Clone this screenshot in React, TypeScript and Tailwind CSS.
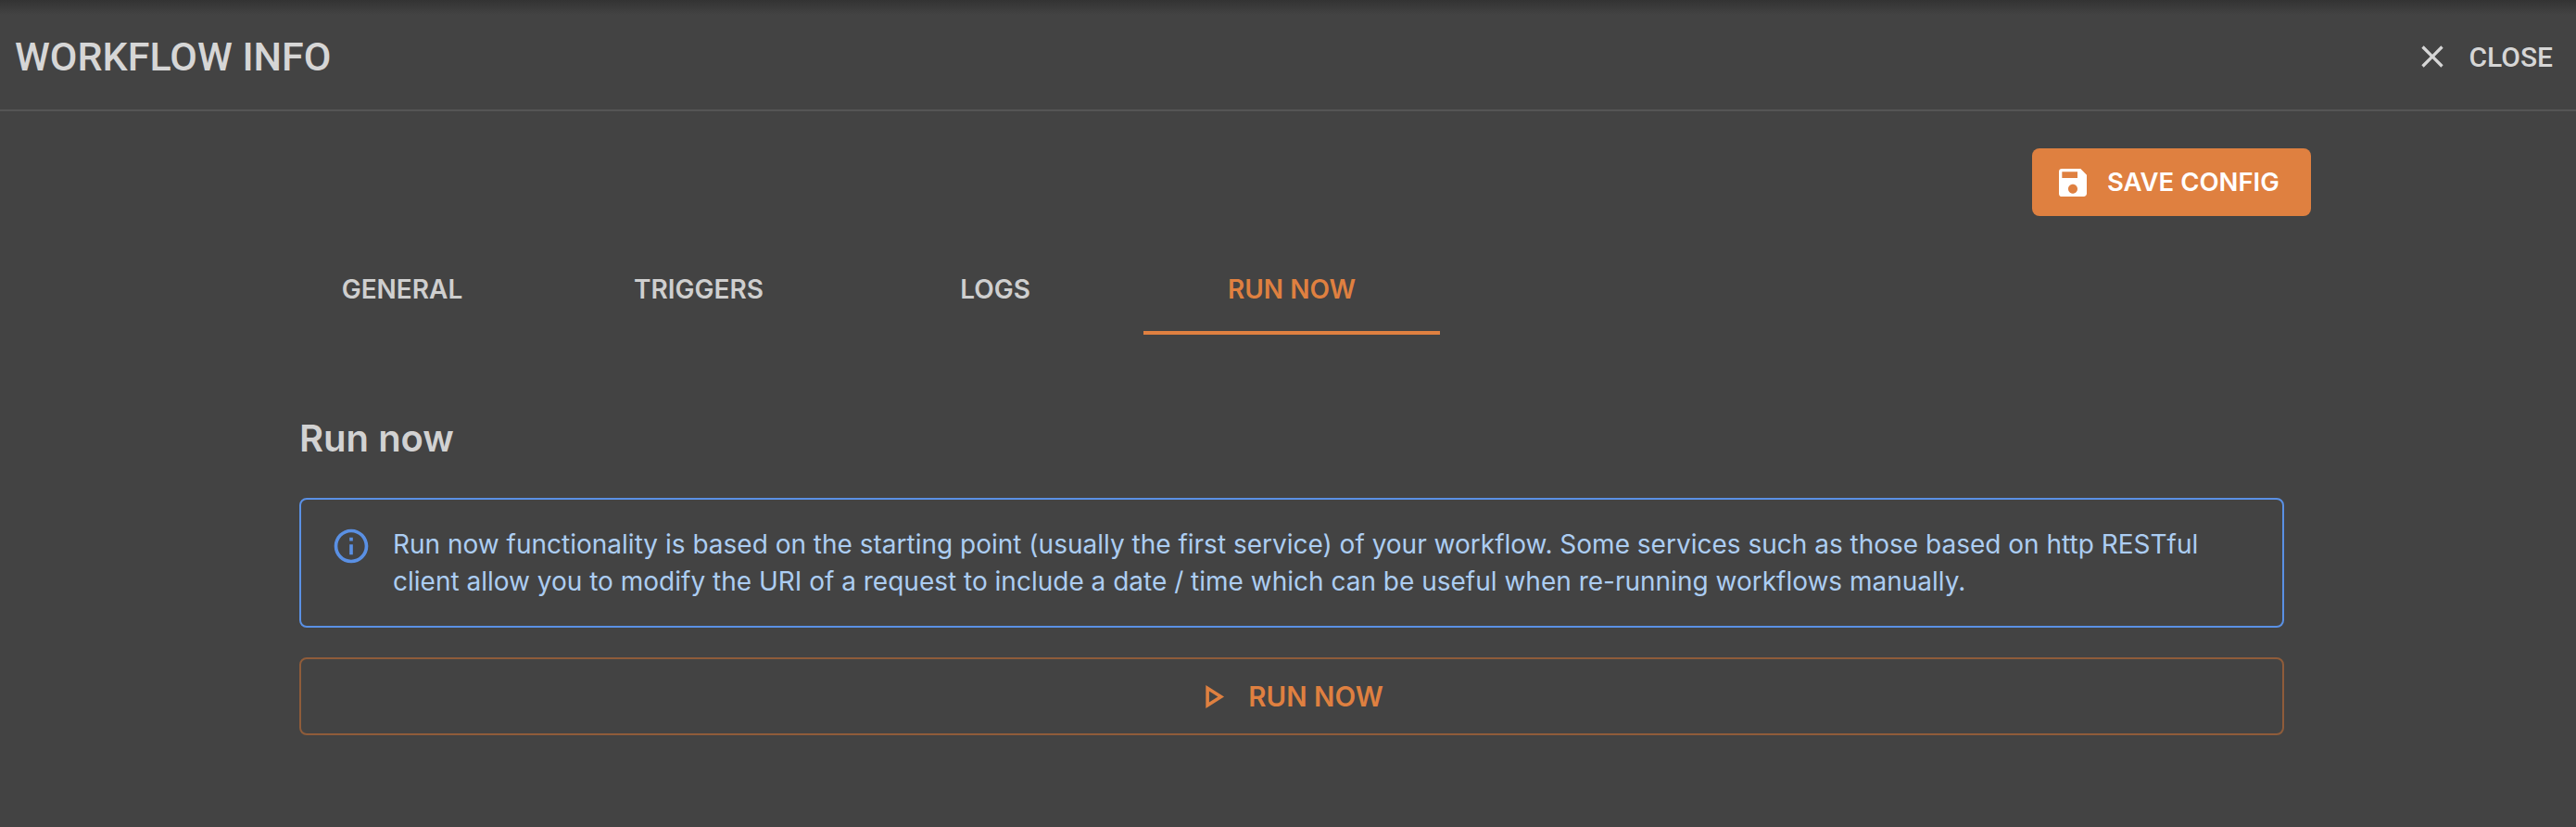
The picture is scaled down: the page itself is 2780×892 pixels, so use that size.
import { MdClose, MdInfoOutline, MdOutlinePlayArrow, MdSave } from 'react-icons/md';

const tabs = ['GENERAL', 'TRIGGERS', 'LOGS', 'RUN NOW'];

export default function App() {
  return (
    <div className="relative h-[892px] w-[2780px] overflow-hidden bg-[#434343] font-['Inter',sans-serif]">
      <div className="absolute inset-x-0 top-0 h-[16px] bg-gradient-to-b from-[#333333] to-[#434343]" />

      <header className="flex h-[120px] items-center justify-between border-b-2 border-[#555555] pt-1 pl-4 pr-[25px]">
        <h1 className="font-['Roboto',sans-serif] text-[43px] font-medium text-[#d6d6d6]">WORKFLOW INFO</h1>
        <button className="flex items-center gap-[19px] text-[30px] font-medium text-[#d6d6d6]">
          <MdClose size={40} />
          <span className="font-['Roboto',sans-serif]">CLOSE</span>
        </button>
      </header>

      <div className="ml-[274px] flex w-[2220px] flex-col">
        <button className="mt-10 flex h-[73px] w-[301px] items-center gap-[17px] self-end rounded-lg bg-[#df8040] pl-[24px] text-[27.5px] font-semibold text-white">
          <MdSave size={40} />
          <span>SAVE CONFIG</span>
        </button>

        <div className="mt-[2px] flex">
          {tabs.map((tab) => (
            <div
              key={tab}
              className={
                tab === 'RUN NOW'
                  ? 'flex h-[126px] w-[320px] items-center justify-center border-b-4 border-[#df8040] pt-[32px] text-[28px] font-semibold text-[#df8040]'
                  : 'flex h-[126px] w-[320px] items-center justify-center border-b-4 border-transparent pt-[32px] text-[28px] font-semibold text-[#cfcfcf]'
              }
            >
              {tab}
            </div>
          ))}
        </div>

        <div className="ml-[49px] w-[2142px]">
          <h2 className="mt-[88px] text-[40px] leading-[48px] font-semibold text-[#d2d2d2]">Run now</h2>

          <div className="mt-[40px] flex h-[140px] rounded-lg border-2 border-[#5a90e4] pt-[28px] pl-[32px]">
            <MdInfoOutline size={44} className="shrink-0 text-[#5a90e4]" />
            <p className="ml-[23px] w-[1980px] text-[28px] leading-[40px] font-normal text-[#accdf2]">
              Run now functionality is based on the starting point (usually the first service) of your workflow. Some services such as those based on http RESTful client allow you to modify the URI of a request to include a date / time which can be useful when re-running workflows manually.
            </p>
          </div>

          <button className="mt-[32px] flex h-[84px] w-full items-center justify-center gap-[17px] rounded-lg border-2 border-[#8f5c3a] text-[29.5px] font-semibold text-[#df8040]">
            <MdOutlinePlayArrow size={43} />
            <span className="pr-[8px]">RUN NOW</span>
          </button>
        </div>
      </div>
    </div>
  );
}
